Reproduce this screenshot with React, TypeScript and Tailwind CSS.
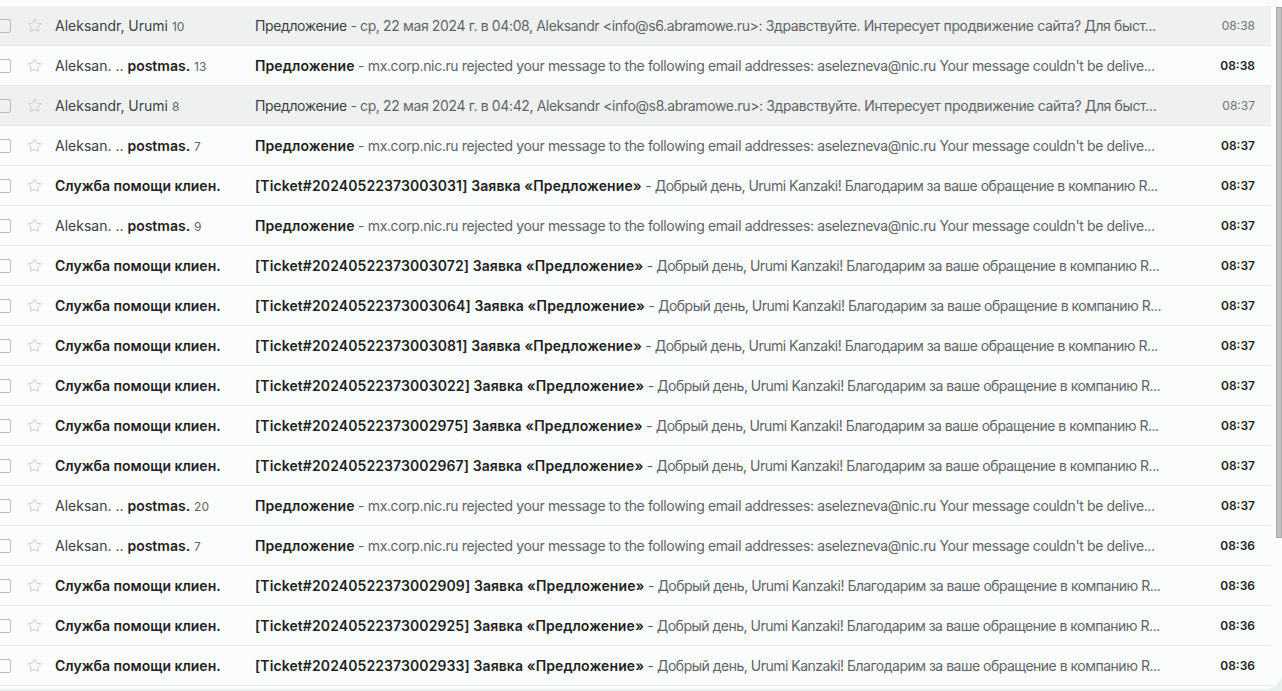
import React from 'react';
import { Star } from 'lucide-react';

interface Mail {
  read: boolean;
  sender: React.ReactNode;
  subject: string;
  snippet: string;
  time: string;
  tight?: boolean;
}

const ticketSnippet = 'Добрый день, Urumi Kanzaki! Благодарим за ваше обращение в компанию R...';
const bounceSnippet =
  "mx.corp.nic.ru rejected your message to the following email addresses: aselezneva@nic.ru Your message couldn't be delive...";

function Postmas({ count }: { count: number }) {
  return (
    <>
      Aleksan. .. <span className="font-semibold text-[#1f1f1f]">postmas.</span>
      <span className="ml-1 text-xs text-[#5f6368]">{count}</span>
    </>
  );
}

function Support() {
  return <span className="font-semibold text-[#1f1f1f]">Служба помощи клиен.</span>;
}

function ticket(id: string, time: string): Mail {
  return {
    read: false,
    sender: <Support />,
    subject: `[Ticket#${id}] Заявка «Предложение»`,
    snippet: ticketSnippet,
    time,
    tight: true,
  };
}

function bounce(count: number, time: string): Mail {
  return { read: false, sender: <Postmas count={count} />, subject: 'Предложение', snippet: bounceSnippet, time };
}

const mails: Mail[] = [
  {
    read: true,
    sender: (
      <>
        Aleksandr, Urumi<span className="ml-1 text-xs text-[#5f6368]">10</span>
      </>
    ),
    subject: 'Предложение',
    snippet:
      'ср, 22 мая 2024 г. в 04:08, Aleksandr <info@s6.abramowe.ru>: Здравствуйте. Интересует продвижение сайта? Для быст...',
    time: '08:38',
  },
  bounce(13, '08:38'),
  {
    read: true,
    sender: (
      <>
        Aleksandr, Urumi<span className="ml-1 text-xs text-[#5f6368]">8</span>
      </>
    ),
    subject: 'Предложение',
    snippet:
      'ср, 22 мая 2024 г. в 04:42, Aleksandr <info@s8.abramowe.ru>: Здравствуйте. Интересует продвижение сайта? Для быст...',
    time: '08:37',
  },
  bounce(7, '08:37'),
  ticket('20240522373003031', '08:37'),
  bounce(9, '08:37'),
  ticket('20240522373003072', '08:37'),
  ticket('20240522373003064', '08:37'),
  ticket('20240522373003081', '08:37'),
  ticket('20240522373003022', '08:37'),
  ticket('20240522373002975', '08:37'),
  ticket('20240522373002967', '08:37'),
  bounce(20, '08:37'),
  bounce(7, '08:36'),
  ticket('20240522373002909', '08:36'),
  ticket('20240522373002925', '08:36'),
  ticket('20240522373002933', '08:36'),
];

function MailRow({ mail }: { mail: Mail }) {
  return (
    <div
      className={
        'flex h-10 items-center border-b border-[#e6eaea] text-sm ' +
        (mail.read ? 'bg-[#eff1f1]' : 'bg-[#fbfdfd]')
      }
    >
      {/* checkbox, partly outside the view */}
      <div className="-ml-[3px] h-[14px] w-[14px] shrink-0 rounded-[2px] border-[1.5px] border-[#b9bcbc]" />
      <Star className="ml-[16px] shrink-0 text-[#c4c7c5]" size={15} strokeWidth={1.4} />
      <div className="ml-[13px] w-[200px] shrink-0 truncate text-[#3c4043]">{mail.sender}</div>
      <div className="w-[925px] shrink-0 truncate">
        <span
          className={
            mail.read ? 'tracking-[-0.38px] text-[#3c4043]' : 'font-semibold tracking-[0.1px] text-[#1f1f1f]'
          }
        >
          {mail.subject}
        </span>
        <span className={(mail.tight ? 'tracking-[-0.5px]' : 'tracking-[-0.37px]') + ' text-[#5f6368]'}>
          {' '}
          - {mail.snippet}
        </span>
      </div>
      <div
        className={
          'ml-auto pr-4 text-xs ' + (mail.read ? 'text-[#6f7376]' : 'font-semibold text-[#1f1f1f]')
        }
      >
        {mail.time}
      </div>
    </div>
  );
}

export default function App() {
  return (
    <div className="h-[691px] w-full overflow-hidden bg-[#e8f1ed] font-['Inter',sans-serif]">
      <div className="flex h-[689px] rounded-br-2xl bg-[#fbfdfd]">
        <div className="flex-1 pt-[6px]">
          {mails.map((mail, i) => (
            <MailRow key={i} mail={mail} />
          ))}
        </div>
        {/* scrollbar */}
        <div className="w-[11px] shrink-0 pl-[5px] pt-[7px]">
          <div className="h-[531px] border border-[#a9a9a9] bg-[#c1c1c1]" />
        </div>
      </div>
    </div>
  );
}
